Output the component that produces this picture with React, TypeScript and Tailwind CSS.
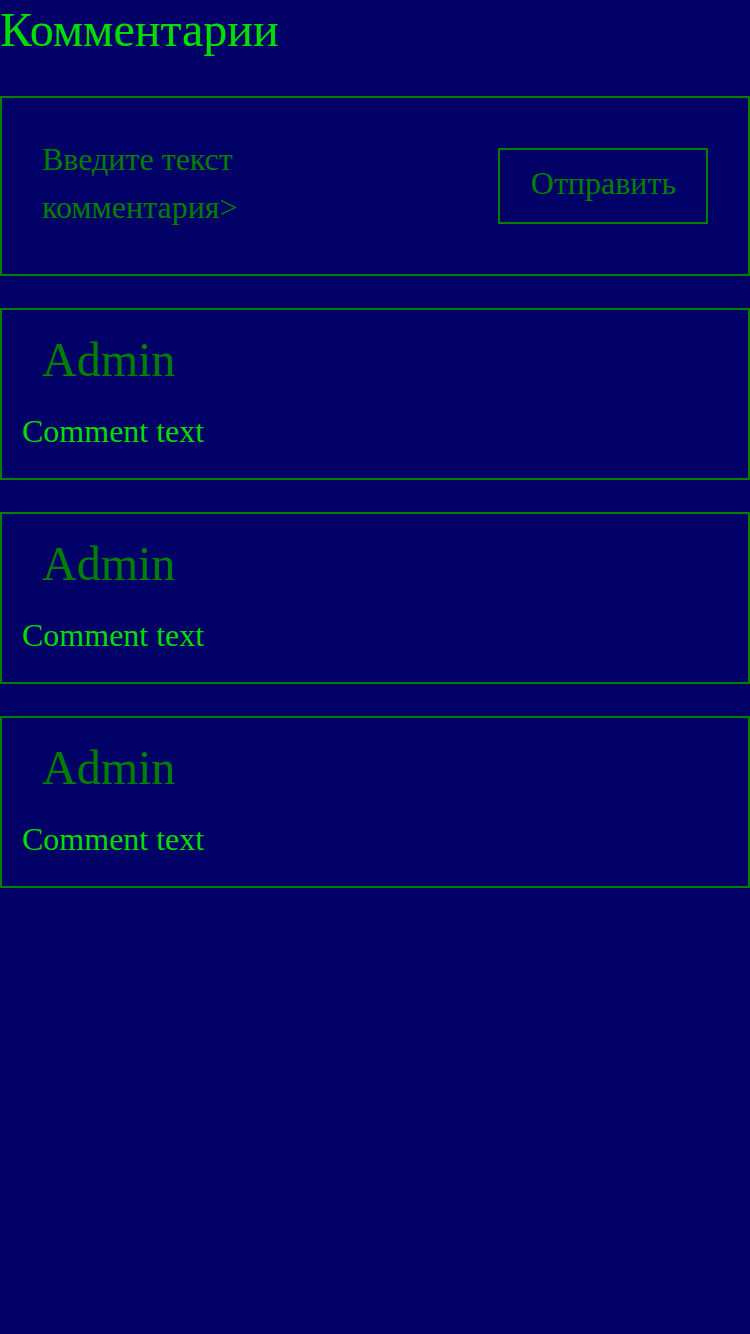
import { useState } from "react";

const comments = [
  { id: 1, author: "Admin", text: "Comment text" },
  { id: 2, author: "Admin", text: "Comment text" },
  { id: 3, author: "Admin", text: "Comment text" },
];

export default function App() {
  const [text, setText] = useState("");

  return (
    <div className="min-h-[1334px] w-[750px] bg-[#000066] font-['Liberation_Serif',serif]">
      <h1 className="pt-[3px] text-[48px] leading-[53px] text-[#00dd00]">Комментарии</h1>

      <form
        className="mt-[40px] flex items-center justify-between border-2 border-[#008000] p-[40px]"
        onSubmit={(e) => e.preventDefault()}
      >
        <textarea
          value={text}
          onChange={(e) => setText(e.target.value)}
          placeholder="Введите текст комментария>"
          rows={2}
          className="mt-[-3px] mb-[3px] h-[96px] w-[250px] resize-none border-0 bg-transparent p-0 text-[32px] leading-[48px] text-[#00dd00] outline-none placeholder:text-[#008000]"
        />
        <button
          type="submit"
          className="border-2 border-[#008000] pl-[31px] pr-[30px] pt-[9px] pb-[15px] text-[32px] leading-[48px] text-[#008000]"
        >
          Отправить
        </button>
      </form>

      <div className="mt-[32px] flex flex-col gap-[32px]">
        {comments.map((c) => (
          <div key={c.id} className="border-2 border-[#008000] px-[20px] pt-[23px] pb-[29px]">
            <h3 className="ml-[20px] text-[48px] leading-[53px] text-[#008000]">{c.author}</h3>
            <p className="mt-[27px] text-[32px] leading-[36px] text-[#00dd00]">{c.text}</p>
          </div>
        ))}
      </div>
    </div>
  );
}
